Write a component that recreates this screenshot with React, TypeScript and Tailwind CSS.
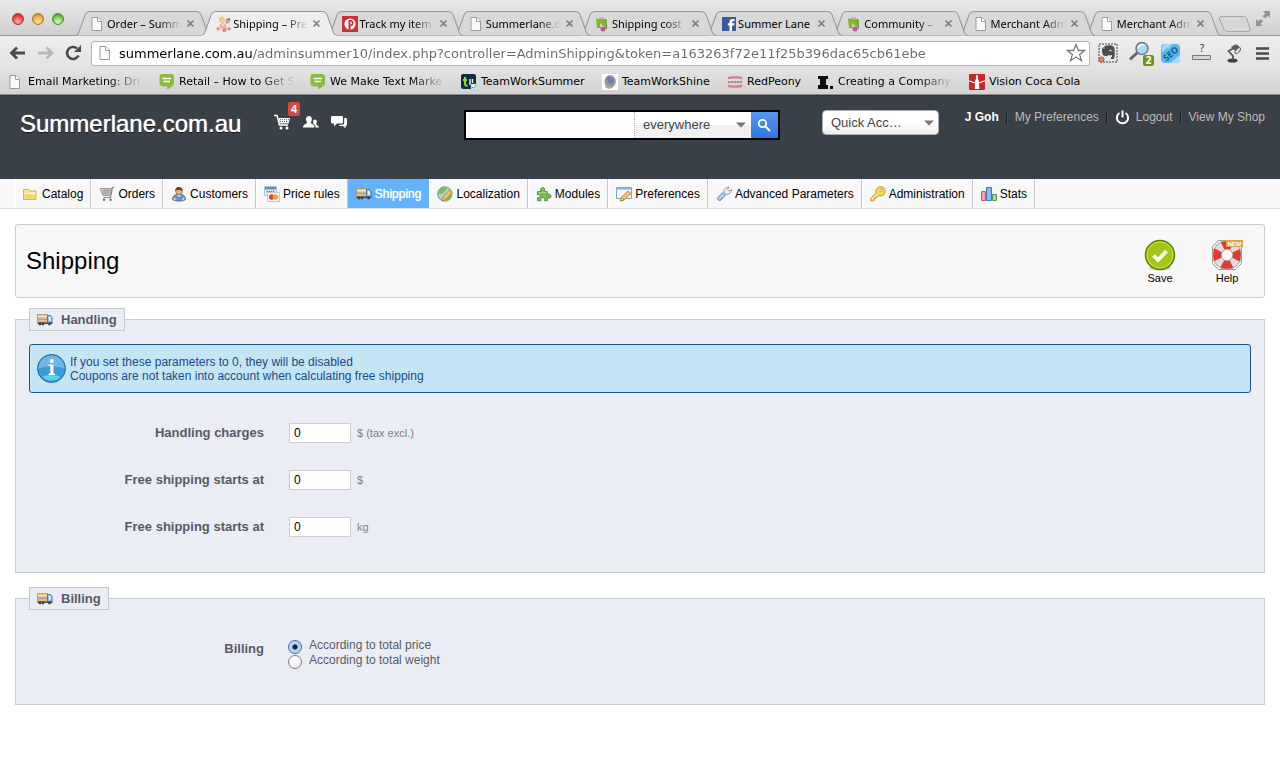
import { useState } from "react";
import type { ReactNode } from "react";

/* ---------- browser icons ---------- */

const PageIcon = () => (
    <svg width="16" height="16" viewBox="0 0 16 16" className="shrink-0">
        <path d="M2 1.500h6l3.500 3.500v9.500H2z" fill="#fafafa" stroke="#9a9a9a" />
        <path d="M7.500 1.500v4h4" fill="#fff" stroke="#9a9a9a" />
    </svg>
);

const CherubIcon = () => (
    <svg width="16" height="16" viewBox="0 0 16 16" className="shrink-0">
        <circle cx="6" cy="4" r="3" fill="#f6c9a0" />
        <path d="M3 4c0-3 3-4 5-3-1 0-3 1-3 3z" fill="#f2c14e" />
        <path d="M9 5c2-2 3 0 6-2-1 3-2 5-5 5z" fill="#d9aa78" />
        <path d="M4 8c2-1 4-1 6 1l.5 2-2 2-4-1-1-2z" fill="#f3a79c" />
        <path d="M0 12l3-1 1 2-2 2zM6 13l4-1 1 2-2 2H7zM11 12l3-1 1 2-2 2z" fill="#e9857c" />
        <circle cx="7" cy="9" r="1.500" fill="#fbd9c4" />
        <path d="M10 3l4-1v1.500l-3 1z" fill="#9b7556" />
    </svg>
);

const PostIcon = () => (
    <svg width="16" height="16" viewBox="0 0 16 16" className="shrink-0">
        <path d="M0 0h16v16H0z" fill="#c8303a" />
        <circle cx="8" cy="8" r="5.600" fill="#fff" />
        <path d="M6.500 4H8.500a3 3 0 0 1 0 6.200v3.500H6.500z" fill="#c8303a" />
        <path d="M8.400 5.500v3a1.500 1.500 0 0 0 0-3z" fill="#fff" />
    </svg>
);

const ShopBagIcon = () => (
    <svg width="16" height="16" viewBox="0 0 16 16" className="shrink-0">
        <path d="M5 3V1.500h3.500V3" fill="none" stroke="#a9c860" />
        <path d="M1 2.500l9 .5 1 9.500L2 12z" fill="#87b52a" />
        <path d="M10 3l1.500.5.5 9-1 .5z" fill="#5f8a1c" />
        <path d="M5 8l1-.5 1 2 2.500 1L9 13H6z" fill="#f3f3f3" stroke="#a9a9a9" strokeWidth=".5" />
        <circle cx="8" cy="13" r="2.500" fill="#c2549b" />
    </svg>
);

const FacebookIcon = () => (
    <svg width="16" height="16" viewBox="0 0 16 16" className="shrink-0">
        <path d="M1 1h14v14H1z" fill="#3b5998" />
        <path d="M8.500 15V9.500H6.800V7.300H8.500V5.800C8.500 4 9.500 3 11.300 3H13.500v2.200h-1.300c-.9 0-1.200.3-1.200 1.100v1H13.500l-.3 2.200H11V15z" fill="#fff" />
    </svg>
);

const ChatIcon = () => (
    <svg width="16" height="16" viewBox="0 0 16 16" className="shrink-0">
        <path d="M3 0h9c2 0 3 1 3 3v6c0 2-1 3-2.500 3.500L8.500 15.500 8 12.500H4C2 12.500.5 11 .5 9V3C.5 1 1.500 0 3 0z" fill="#8cba3f" />
        <path d="M3.500 4.500h8.500M4.500 7.500h6.500" stroke="#fff" strokeWidth="1.500" />
    </svg>
);

const TeamSummerIcon = () => (
    <svg width="16" height="16" viewBox="0 0 16 16" className="shrink-0">
        <rect width="15" height="15" rx="2" fill="#0e2c45" />
        <path d="M4 3v7c0 1 1 2 2.500 1.500M2 6h4" stroke="#9fd22b" strokeWidth="2" fill="none" />
        <path d="M9 5v6M11.500 5v4" stroke="#e9eef2" strokeWidth="1.500" />
        <path d="M10 10h6v6h-6z" fill="#e9f5ea" stroke="#7fae8c" strokeWidth=".6" />
        <path d="M11 13l1.500 1.500L15 11.500" stroke="#319a45" fill="none" />
    </svg>
);

const TeamShineIcon = () => (
    <svg width="16" height="16" viewBox="0 0 16 16" className="shrink-0">
        <path d="M0 0h16v16H0z" fill="#fff" />
        <ellipse cx="8" cy="7.500" rx="5.500" ry="6.500" fill="#8b96b3" />
        <path d="M5 4c2-2 5-1 6 1s0 5-2 5-4-3-4-6z" fill="#6f7ea6" />
        <path d="M3 12c3-1 5 0 8 1l-3 2-4-1z" fill="#b6a88e" />
        <path d="M12 3c2 3 2 6 0 9" stroke="#b9ad98" fill="none" />
    </svg>
);

const RedPeonyIcon = () => (
    <svg width="16" height="16" viewBox="0 0 16 16" className="shrink-0">
        <path d="M1 4.500c3-2 5-1 7-1s4-1 7 1" stroke="#d18083" strokeWidth="2.200" fill="none" />
        <path d="M1 11.500c3 2 5 1 7 1s4 1 7-1" stroke="#d18083" strokeWidth="2.200" fill="none" />
        <path d="M1 8h14" stroke="#bb8587" strokeWidth="2" strokeDasharray="2.500 .5" />
    </svg>
);

const CompanyIcon = () => (
    <svg width="16" height="16" viewBox="0 0 16 16" className="shrink-0">
        <path d="M0 2h10v3H8v6h2v4H0v-4h2V5H0zM12 12h3v3h-3z" fill="#0b0b0b" />
    </svg>
);

const CokeIcon = () => (
    <svg width="16" height="16" viewBox="0 0 16 16" className="shrink-0">
        <rect width="16" height="16" rx="1" fill="#c5292b" />
        <path d="M7.300 1h1.400l.3 4c1 1.500 1.300 3 1 5l.3 5H5.700L6 10c-.3-2 0-3.500 1-5z" fill="#fff" />
        <path d="M0 7c3 0 4 2 6 1.500M10 8.500c2 .5 3-1.500 6-1.500" stroke="#fff" fill="none" strokeWidth="1.200" />
    </svg>
);

/* ---------- menu icons ---------- */

const FolderIcon = () => (
    <svg width="16" height="16" viewBox="0 0 16 16" className="shrink-0">
        <path d="M.5 3.500h5l1 1.500H13v8.500H.500z" fill="#fbe58f" stroke="#dcb04c" />
        <path d="M2 7h3.500l1-1H12V8H2z" fill="#fdf6cf" />
        <path d="M2 8.500h10v4H2z" fill="#f7d566" />
    </svg>
);

const TrolleyIcon = () => (
    <svg width="16" height="16" viewBox="0 0 16 16" className="shrink-0">
        <path d="M1 2.500h11.500L11 9.500H4z" fill="#dcdcdc" stroke="#9a9a9a" />
        <path d="M5 3v6M7 3v6M9 3v6M2 4.800h10M3 7h8.500" stroke="#8a8a8a" strokeWidth=".7" />
        <path d="M15.500 1.500H13.500L11.500 11.500H4.500" fill="none" stroke="#888" strokeWidth="1.200" />
        <circle cx="5" cy="13.800" r="1.300" fill="#777" />
        <circle cx="11.500" cy="13.800" r="1.300" fill="#777" />
    </svg>
);

const UserIcon = () => (
    <svg width="16" height="16" viewBox="0 0 16 16" className="shrink-0">
        <path d="M1.500 13.500c0-3 2-4.500 4-5h5c2 .5 4 2 4 5-2 2-11 2-13 0z" fill="#6793cf" stroke="#4a73b0" />
        <path d="M6.500 9l1.500 2L9.500 9z" fill="#fff" />
        <path d="M2 12l2-.5 1.500 2.500-2 .5zM14 12l-2-.5-1.500 2.500 2 .5z" fill="#f2c095" />
        <circle cx="8" cy="5.500" r="3.300" fill="#e9b07c" stroke="#9b6235" strokeWidth=".6" />
        <path d="M4.300 5.500C3.800 2 6 .8 8.500 1c2.300.2 3.500 2 3.200 4.500C10.500 3.500 7 5 5.500 3.800z" fill="#70431f" />
    </svg>
);

const PriceIcon = () => (
    <svg width="16" height="16" viewBox="0 0 16 16" className="shrink-0">
        <path d="M.5.500h12v9H.500z" fill="#eef4fb" stroke="#a9c1dc" />
        <path d="M1 1h11v2.500H1z" fill="#5b8fd0" />
        <path d="M2.500 5.500h8" stroke="#6b6f95" strokeWidth="1.600" strokeDasharray="1.500 .6" />
        <path d="M3.500 6.500h12v9h-12z" fill="#fbfbfb" stroke="#c6c6c6" />
        <circle cx="7.700" cy="11" r="2.800" fill="#da3c3c" />
        <circle cx="11.500" cy="11" r="2.800" fill="#f0a437" />
    </svg>
);

const TruckIcon = () => (
    <svg width="16" height="16" viewBox="0 0 16 16" className="shrink-0">
        <path d="M.5 2.500h10v8H.500z" fill="#eec48a" stroke="#9b8f80" strokeWidth=".8" />
        <path d="M1 6.500h9v1.500H1z" fill="#9ba4aa" />
        <path d="M1 8.500h9V10H1z" fill="#e3b77b" />
        <path d="M1 4.500h9" stroke="#f8e3bf" />
        <path d="M10.500 3.500h3l1.500 2v5.500h-4.500z" fill="#9dc0ee" stroke="#4d6d9f" strokeWidth=".9" />
        <path d="M12 5h1.300l.7 1.500v2H12z" fill="#eef6ff" />
        <path d="M.5 10.500h15V12H.500z" fill="#56504a" />
        <circle cx="3" cy="12" r="1.400" fill="#463f38" />
        <circle cx="6" cy="12" r="1.400" fill="#463f38" />
        <circle cx="12.500" cy="12" r="1.400" fill="#463f38" />
    </svg>
);

const GlobeIcon = () => (
    <svg width="16" height="16" viewBox="0 0 16 16" className="shrink-0">
        <circle cx="7.800" cy="8" r="7.200" fill="#a9d3d8" stroke="#6f9f5b" />
        <path d="M2 4c2-3 6-3 8-2 0 2-2 2-3 4S3 8 1.500 8C1 6 1.500 5 2 4zM8 8c3-1 5-1 6.500 0 0 3-2 6-6 6.500C8 12 6 10 8 8z" fill="#7fba5b" />
        <path d="M5 14.500l1-3.500 6.500-7 2.500 2.500-6.500 7z" fill="#f5c55a" stroke="#b98433" strokeWidth=".8" />
        <path d="M5 14.500l1-3.300 2.300 2.300z" fill="#fff0d0" stroke="#8d6a32" strokeWidth=".5" />
    </svg>
);

const PuzzleIcon = () => (
    <svg width="16" height="16" viewBox="0 0 16 16" className="shrink-0">
        <path d="M1.500 5.500H5C4 3.500 5 1.500 6.700 1.500S9.300 3.500 8.300 5.500h3v3c2-1 3.700 0 3.700 1.700s-1.700 2.500-3.700 1.500v3H8.300c.8-2-.2-3-1.600-3s-2.500 1-1.700 3H1.500v-3.200c2 .7 2.700-.3 2.700-1.500S3.500 8.300 1.500 9z" fill="#7cba62" stroke="#5b9847" />
        <path d="M2.500 6.500h8" stroke="#a9d694" />
    </svg>
);

const PrefIcon = () => (
    <svg width="16" height="16" viewBox="0 0 16 16" className="shrink-0">
        <path d="M.5 1.500h15v11H.500z" fill="#f6faff" stroke="#7ea4d8" />
        <path d="M1 2h14v1.500H1z" fill="#86b0e8" />
        <path d="M4.500 15l1-4 6.500-6L15 7.500l-7 6.500z" fill="#f7c460" stroke="#b5802f" strokeWidth=".8" />
        <path d="M4.500 15l1-3.500L8 14z" fill="#fff0d0" stroke="#7b5a2b" strokeWidth=".6" />
    </svg>
);

const WrenchIcon = () => (
    <svg width="16" height="16" viewBox="0 0 16 16" className="shrink-0">
        <path d="M8 6.500C7.500 3.500 9.500 1 13 1L11.500 3.500 13 5l2.500-1.500C16 6.500 13 9 10 8.300z" fill="#ececec" stroke="#8b8b8b" strokeWidth=".9" />
        <path d="M7 6.500l2.500 2.500-4.500 5c-2 1.800-4.500-.8-3-2.700z" fill="#a9c2ef" stroke="#6c8cc6" />
        <path d="M7 8.500l-4 4" stroke="#d3e1f9" />
    </svg>
);

const KeyIcon = () => (
    <svg width="16" height="16" viewBox="0 0 16 16" className="shrink-0">
        <path d="M6 7C5 3 8 .5 11 .7s5 3 4 6-4 3.800-6 3L7.500 11H6v1.500H4.500V14L3.500 15H.700v-2.500z" fill="#f8d65a" stroke="#c09430" strokeWidth=".9" />
        <path d="M2 13l5-5" stroke="#fff2b2" />
        <circle cx="11.700" cy="4.300" r="1.300" fill="#fff" stroke="#a87813" strokeWidth=".6" />
    </svg>
);

const StatsIcon = () => (
    <svg width="16" height="16" viewBox="0 0 16 16" className="shrink-0">
        <path d="M.5 5.500h4v9h-4z" fill="#f19a9a" stroke="#cf5b5b" />
        <path d="M5.500 1.500h5v13h-5z" fill="#7fb0f0" stroke="#4478bf" />
        <path d="M11.500 8.500h4v6h-4z" fill="#9cd09b" stroke="#5a9a5a" />
        <path d="M2.500 7v7M8 3v11M13.500 10v4" stroke="#fff" strokeOpacity=".3" />
    </svg>
);

interface BrowserTab {
    title: string;
    icon: ReactNode;
    fade: boolean;
}

const tabs: BrowserTab[] = [
    { title: "Order – Summ", icon: <PageIcon />, fade: true },
    { title: "Shipping – Pre", icon: <CherubIcon />, fade: true },
    { title: "Track my item", icon: <PostIcon />, fade: true },
    { title: "Summerlane.c", icon: <PageIcon />, fade: true },
    { title: "Shipping cost", icon: <ShopBagIcon />, fade: true },
    { title: "Summer Lane", icon: <FacebookIcon />, fade: false },
    { title: "Community –", icon: <ShopBagIcon />, fade: true },
    { title: "Merchant Adm", icon: <PageIcon />, fade: true },
    { title: "Merchant Adm", icon: <PageIcon />, fade: true },
];

const bookmarks = [
    { title: "Email Marketing: Dri", icon: <PageIcon />, width: "w-[151px]", fade: true },
    { title: "Retail – How to Get S", icon: <ChatIcon />, width: "w-[151px]", fade: true },
    { title: "We Make Text Marke", icon: <ChatIcon />, width: "w-[151px]", fade: true },
    { title: "TeamWorkSummer", icon: <TeamSummerIcon />, width: "w-[141px]", fade: false },
    { title: "TeamWorkShine", icon: <TeamShineIcon />, width: "w-[125px]", fade: false },
    { title: "RedPeony", icon: <RedPeonyIcon />, width: "w-[91px]", fade: false },
    { title: "Creating a Company", icon: <CompanyIcon />, width: "w-[151px]", fade: true },
    { title: "Vision Coca Cola", icon: <CokeIcon />, width: "w-[125px]", fade: false },
];

const menu = [
    { title: "Catalog", icon: <FolderIcon /> },
    { title: "Orders", icon: <TrolleyIcon /> },
    { title: "Customers", icon: <UserIcon /> },
    { title: "Price rules", icon: <PriceIcon /> },
    { title: "Shipping", icon: <TruckIcon /> },
    { title: "Localization", icon: <GlobeIcon /> },
    { title: "Modules", icon: <PuzzleIcon /> },
    { title: "Preferences", icon: <PrefIcon /> },
    { title: "Advanced Parameters", icon: <WrenchIcon /> },
    { title: "Administration", icon: <KeyIcon /> },
    { title: "Stats", icon: <StatsIcon /> },
];

const fadeMask = "[mask-image:linear-gradient(to_right,black_70%,transparent)]";

function Tab({ tab, index }: { tab: BrowserTab; index: number }) {
    const active = index === 1;
    return (
        <div className="relative -mr-[10px] h-[25px] min-w-0 flex-1" style={{ zIndex: active ? 20 : 10 - index }}>
            <svg className="absolute inset-0 h-full w-full" viewBox="0 0 136 25" preserveAspectRatio="none">
                <path
                    d="M0 24.500C3 24.500 3 23 4 21L10 4C11 1.500 12 .5 15 .5H121C124 .5 125 1.500 126 4L132 21C133 23 133 24.500 136 24.500"
                    fill={active ? "#eeeeee" : "#d8d8d8"}
                    stroke="#979797"
                />
                {active && <path d="M1 24h134v1H1z" fill="#eeeeee" />}
            </svg>
            <div className="relative flex h-[25px] items-center gap-[1px] pl-[15px] pr-[16px]">
                {tab.icon}
                <span className={`min-w-0 flex-1 whitespace-nowrap text-[11px] leading-4 text-black ${tab.fade ? fadeMask : ""}`}>
                    {tab.title}
                </span>
                <button type="button" aria-label="Close tab" className="ml-[3px] shrink-0">
                    <svg width="9" height="9" viewBox="0 0 9 9">
                        <path d="M1.500 1.500l6 6M7.500 1.500l-6 6" stroke="#777" strokeWidth="1.500" />
                    </svg>
                </button>
            </div>
        </div>
    );
}

function BrowserChrome() {
    return (
        <div className="font-['Noto_Sans','DejaVu_Sans',sans-serif]">
            <div className="flex h-[36px] border-b border-[#979797] bg-linear-to-b from-[#e9e9e9] to-[#cfcfcf] pt-[11px]">
                <div className="flex w-[75px] shrink-0 gap-[8px] pl-[12px] pt-[2px]">
                    <button type="button" aria-label="Close" className="size-[12px] rounded-full border border-[#a33] bg-[radial-gradient(circle_at_50%_75%,#ffb0a8,#e0423e_60%,#b32020)]" />
                    <button type="button" aria-label="Minimize" className="size-[12px] rounded-full border border-[#a8742a] bg-[radial-gradient(circle_at_50%_75%,#ffe9a0,#eca93a_60%,#b9761c)]" />
                    <button type="button" aria-label="Zoom" className="size-[12px] rounded-full border border-[#4e8a3a] bg-[radial-gradient(circle_at_50%_75%,#d8ffb8,#76bd51_60%,#3f8428)]" />
                </div>
                <div className="flex min-w-0 flex-1 pr-[10px]">
                    {tabs.map((t, i) => (
                        <Tab key={i} tab={t} index={i} />
                    ))}
                </div>
                <div className="flex w-[59px] shrink-0 items-start">
                    <button type="button" aria-label="New tab" className="-ml-[3px] mt-[5px]">
                        <svg width="34" height="17" viewBox="0 0 34 17">
                            <path d="M4 .5H25C27 .5 28 1 29 3L32 13C32.500 15 32 15.500 30 15.500H10C8 15.500 7 15 6 13.500L1.500 3C1 1.500 1.500.5 4 .5z" fill="#d6d6d6" stroke="#a5a5a5" />
                        </svg>
                    </button>
                    <svg width="16" height="16" viewBox="0 0 16 16" className="ml-[3px]">
                        <path d="M8 0h7v7l-2.200-2.200L10 7.500 7.700 5.200l2.600-2.800zM1 8l2.200 2.200L5.500 8 8 10.300 5.500 12.700 7.700 15H1z" fill="#959595" />
                    </svg>
                </div>
            </div>

            <div className="flex h-[34px] items-center bg-linear-to-b from-[#eeeeee] to-[#e2e2e2] pl-[9px] pr-[11px]">
                <button type="button" aria-label="Back">
                    <svg width="17" height="14" viewBox="0 0 17 14">
                        <path d="M16 7H3M8 1.500L2.500 7 8 12.500" fill="none" stroke="#4a4a4a" strokeWidth="2.800" />
                    </svg>
                </button>
                <button type="button" aria-label="Forward" className="ml-[12px]">
                    <svg width="17" height="14" viewBox="0 0 17 14">
                        <path d="M0 7h13M8.500 1.500L14 7l-5.500 5.500" fill="none" stroke="#b9b9b9" strokeWidth="2.800" />
                    </svg>
                </button>
                <button type="button" aria-label="Reload" className="ml-[10px]">
                    <svg width="17" height="16" viewBox="0 0 17 16">
                        <path d="M13.500 10.500A6 6 0 1 1 12 3.500" fill="none" stroke="#4a4a4a" strokeWidth="2.600" />
                        <path d="M16 0v7H9z" fill="#4a4a4a" />
                    </svg>
                </button>
                <div className="ml-[9px] flex h-[25px] min-w-0 flex-1 items-center rounded-[3px] border border-[#b5b5b5] bg-white pl-[6px] pr-[3px]">
                    <PageIcon />
                    <input
                        type="text"
                        aria-label="Address"
                        defaultValue="summerlane.com.au/adminsummer10/index.php?controller=AdminShipping&token=a163263f72e11f25b396dac65cb61ebe"
                        className="ml-[5px] h-[21px] min-w-0 flex-1 bg-linear-to-r from-black from-[134px] to-[#6a6a6a] to-[134px] bg-clip-text font-['DejaVu_Sans',sans-serif] text-[13px] text-transparent caret-black outline-none"
                    />
                    <button type="button" aria-label="Bookmark this page">
                        <svg width="20" height="20" viewBox="0 0 20 20">
                            <path d="M10 1.500l2.400 6h6.100l-4.900 3.900 1.900 6.300L10 14l-5.500 3.700 1.900-6.300L1.500 7.500h6.100z" fill="#fff" stroke="#7d7d7d" strokeWidth="1.300" />
                        </svg>
                    </button>
                </div>
                <div className="ml-[8px] flex shrink-0 items-center">
                    <svg width="20" height="20" viewBox="0 0 20 20">
                        <path d="M1 1h18v18H1z" fill="none" stroke="#444" strokeDasharray="2 1" />
                        <path d="M4 6l3-3c3-1 7-1 9 1 1 3 1 9 0 12h-3v-2h1v-2c-2 1-3 0-4 0 0 2-4 1-5 0-1-2-1-4-1-6z" fill="#4c4c4c" />
                        <path d="M4 6h3V3z" fill="#7c7c7c" />
                        <path d="M11 8c1-1 3-1 3 .5" fill="none" stroke="#ddd" />
                        <circle cx="3.500" cy="16.500" r="2.500" fill="#ec8068" stroke="#c25545" />
                    </svg>
                    <svg width="25" height="25" viewBox="0 0 25 25" className="ml-[11px]">
                        <path d="M2 17.500l6-5.500" stroke="#5e666c" strokeWidth="3" strokeLinecap="round" />
                        <circle cx="13" cy="7.500" r="6" fill="#a9daf2" stroke="#6b7780" strokeWidth="1.500" />
                        <path d="M9 7c1-3 4-4 6-3" stroke="#fff" strokeWidth="1.800" fill="none" />
                        <rect x="14" y="14" width="11" height="11" rx="2" fill="#6b9614" />
                        <text x="19.500" y="23" textAnchor="middle" fontSize="10" fontWeight="700" fill="#fff">2</text>
                    </svg>
                    <svg width="19" height="19" viewBox="0 0 19 19" className="ml-[7px] overflow-visible">
                        <rect width="19" height="19" rx="4" fill="#5db9e6" />
                        <path d="M0 4l4-4h5L2 8zM19 11v6l-3 2H9zM5 0h6l-4 5z" fill="#a5dcf5" />
                        <text x="9.500" y="13" textAnchor="middle" fontSize="9" fontWeight="700" fill="#0d5e9c" transform="rotate(-40 9.500 9.500)">SEO</text>
                    </svg>
                    <svg width="20" height="20" viewBox="0 0 20 20" className="ml-[12px] overflow-visible">
                        <text x="10" y="9" textAnchor="middle" fontSize="10" fill="#333">?</text>
                        <path d="M.5 12.500h18v4H.500z" fill="#d6d6d6" stroke="#777" />
                    </svg>
                    <svg width="15" height="19" viewBox="0 0 15 19" className="ml-[14px]">
                        <ellipse cx="6.500" cy="16.500" rx="5" ry="2" fill="#3c3c3c" />
                        <path d="M7 16V12L2.500 7 8 4" fill="none" stroke="#555" strokeWidth="1.800" />
                        <path d="M5 3l4-2.500c3 0 5 2 5 5L11 9z" fill="#5e5e5e" />
                        <ellipse cx="11" cy="7" rx="3.500" ry="1.800" fill="#ddd" stroke="#666" transform="rotate(-50 11 6)" />
                    </svg>
                    <button type="button" aria-label="Menu" className="ml-[15px]">
                        <svg width="13" height="13" viewBox="0 0 13 13">
                            <path d="M0 1.500h13M0 6.500h13M0 11.500h13" stroke="#4a4a4a" strokeWidth="2.600" />
                        </svg>
                    </button>
                </div>
            </div>

            <div className="flex h-[25px] items-center overflow-hidden border-b border-[#8d8d8d] bg-linear-to-b from-[#e2e2e2] to-[#d2d2d2] pl-[8px] font-['DejaVu_Sans',sans-serif]">
                {bookmarks.map((b) => (
                    <a key={b.title} href="#" className={`flex shrink-0 items-center gap-[4px] pr-[15px] text-black ${b.width}`}>
                        {b.icon}
                        <span className={`min-w-0 flex-1 whitespace-nowrap text-[11px] leading-4 ${b.fade ? fadeMask : ""}`}>{b.title}</span>
                    </a>
                ))}
            </div>
        </div>
    );
}

const Arrow = () => (
    <svg width="10" height="6" viewBox="0 0 10 6" className="pointer-events-none absolute right-[5px] top-1/2 -translate-y-1/2">
        <path d="M0 .5h10L5 5.500z" fill="#777" />
    </svg>
);

const Separator = () => <span className="mx-[7px] mt-[2px] h-[12px] w-[2px] border-l border-[#1d2126] bg-[#474f57]" />;

function ShopHeader() {
    return (
        <header className="flex h-[84px] items-start border-t border-[#2f353b] bg-[#3a4047] pl-[20px] pr-[15px] text-[12px]">
            <a href="#" className="w-[254px] shrink-0 pt-[14px] text-[24px] leading-[28px] text-white [text-shadow:0_0_1px_#fff,0_1px_0_#000]">Summerlane.com.au</a>
            <div className="flex w-[190px] shrink-0 gap-[12px] pt-[18px]">
                <a href="#" aria-label="Orders" className="relative">
                    <svg width="17" height="17" viewBox="0 0 17 17">
                        <path d="M0 1.500h3l2.500 9.500H14" fill="none" stroke="#fff" strokeWidth="1.500" />
                        <path d="M4.500 4H16l-1.500 5.500H6z" fill="#fff" />
                        <path d="M6 5.700h9M6 7.700h8" stroke="#3a4047" strokeWidth=".9" strokeDasharray="1 1" />
                        <circle cx="7" cy="14" r="1.500" fill="#fff" />
                        <circle cx="13" cy="14" r="1.500" fill="#fff" />
                    </svg>
                    <span className="absolute -top-[12px] left-[14px] h-[14px] w-[12px] rounded-[2px] bg-[#d5493f] text-center text-[11px] font-bold leading-[14px] text-white">4</span>
                </a>
                <a href="#" aria-label="Customers">
                    <svg width="16" height="17" viewBox="0 0 16 17">
                        <path d="M6 2c2 0 3 1.500 2.800 3.500S8 8 7.800 8.500c0 1.500 3.700 1.500 3.700 5H0c0-3.500 4-3.500 4-5C4 8 3.200 7.500 3 5.500S4 2 6 2z" fill="#fff" />
                        <path d="M11.800 5.500c1.600 0 2.200 1.200 2 2.700s-.6 1.600-.6 2c0 1 2.800 1 2.800 3.300h-3.500c0-2.500-1.500-3.300-2.500-3.800.3-.5.300-.6.200-1.500-.2-1.500.3-2.700 1.600-2.700z" fill="#fff" />
                    </svg>
                </a>
                <a href="#" aria-label="Messages">
                    <svg width="17" height="17" viewBox="0 0 17 17">
                        <path d="M1.500 2h9c1 0 1.500.5 1.500 1.500V8c0 1-.5 1.500-1.500 1.500H6L3 12.500V9.500H1.500C.5 9.500 0 9 0 8V3.500C0 2.500.5 2 1.500 2z" fill="#fff" />
                        <path d="M13.200 4h1.300c1 0 1.500.5 1.500 1.500v5c0 .8-.5 1.500-1.500 1.500v2.500L12 12H7.500L9 10.700h2.200c1.300 0 2-.7 2-2z" fill="#fff" />
                    </svg>
                </a>
            </div>
            <form className="mt-[14px] flex h-[30px] w-[316px] shrink-0 border-2 border-black bg-white" onSubmit={(e) => e.preventDefault()}>
                <input type="text" aria-label="Search" className="w-[168px] bg-white px-[6px] text-[13px] text-black outline-none" />
                <div className="relative flex-1 border-l border-dotted border-[#aaa]">
                    <select aria-label="Search in" className="h-full w-full appearance-none bg-linear-to-b from-white from-50% to-[#f0f0f0] to-50% pl-[8px] text-[13px] text-[#444] outline-none">
                        <option>everywhere</option>
                    </select>
                    <Arrow />
                </div>
                <button type="submit" aria-label="Search" className="flex w-[27px] items-center justify-center bg-linear-to-b from-[#5596ee] to-[#2d78e4]">
                    <svg width="15" height="15" viewBox="0 0 15 15">
                        <circle cx="5.500" cy="5.500" r="3.700" fill="none" stroke="#fff" strokeWidth="1.800" />
                        <path d="M8.500 8.500l4.500 4.500" stroke="#fff" strokeWidth="2.200" />
                    </svg>
                </button>
            </form>
            <div className="relative ml-[42px] mt-[14px] h-[25px] w-[117px] shrink-0">
                <select aria-label="Quick Access" className="h-full w-full appearance-none rounded-[4px] border border-[#aaa] bg-linear-to-b from-white from-50% to-[#ededed] pl-[8px] text-[13px] text-[#444] outline-none">
                    <option>Quick Acc…</option>
                </select>
                <Arrow />
            </div>
            <div className="ml-auto flex items-center pt-[12px] leading-[18px] text-[#bbbbbb]">
                <span className="font-bold text-white">J Goh</span>
                <Separator />
                <a href="#">My Preferences</a>
                <Separator />
                <a href="#" className="flex items-center gap-[6px]">
                    <svg width="15" height="15" viewBox="0 0 15 15">
                        <path d="M4.500 3A5.600 5.600 0 1 0 10.500 3M7.500 .5v7" fill="none" stroke="#fff" strokeWidth="2" />
                    </svg>
                    Logout
                </a>
                <Separator />
                <a href="#">View My Shop</a>
            </div>
        </header>
    );
}

function Nav() {
    return (
        <nav className="flex h-[30px] border-b border-[#dedede] bg-[#f8f8f8] pl-[15px] text-[12px]">
            {menu.map((m) => (
                <a
                    key={m.title}
                    href="#"
                    className={
                        m.title === "Shipping"
                            ? "flex items-center gap-[3px] bg-[#64b2fd] px-[8px] text-white [text-shadow:0_0_1px_#fff]"
                            : "flex items-center gap-[3px] border-l border-r border-l-white border-r-[#c8c8c8] px-[7px] text-black"
                    }
                >
                    {m.icon}
                    {m.title}
                </a>
            ))}
        </nav>
    );
}

function Legend({ children }: { children: ReactNode }) {
    return (
        <legend className="flex h-[23px] items-center gap-[8px] border border-[#c5c8cf] bg-[#ebedf4] px-[7px] text-[13px] font-bold text-[#585a69]">
            <TruckIcon />
            {children}
        </legend>
    );
}

const fields = [
    { id: "handling", label: "Handling charges", unit: "$ (tax excl.)" },
    { id: "free-price", label: "Free shipping starts at", unit: "$" },
    { id: "free-weight", label: "Free shipping starts at", unit: "kg" },
];

const billingOptions = [
    { id: "price", label: "According to total price" },
    { id: "weight", label: "According to total weight" },
];

export default function App() {
    const [values, setValues] = useState<Record<string, string>>({ handling: "0", "free-price": "0", "free-weight": "0" });
    const [billing, setBilling] = useState("price");

    return (
        <div className="min-h-screen bg-white font-['Liberation_Sans',Arial,sans-serif]">
            <BrowserChrome />
            <ShopHeader />
            <Nav />

            <main className="px-[15px] pt-[15px]">
                <div className="flex h-[74px] items-center justify-between rounded-[3px] border border-[#cccccc] bg-[#f8f8f8] pl-[10px] pr-[17px]">
                    <h1 className="text-[24px] leading-[30px] text-black">Shipping</h1>
                    <div className="flex gap-[27px] text-[11px] leading-[14px] text-black">
                        <button type="button" className="flex w-[40px] flex-col items-center pt-[1px]">
                            <svg width="32" height="32" viewBox="0 0 32 32">
                                <ellipse cx="16" cy="29" rx="11" ry="2.500" fill="#ccc" />
                                <circle cx="16" cy="16" r="14.500" fill="#a3c614" stroke="#5b8408" strokeWidth="1.500" />
                                <circle cx="16" cy="16" r="13" fill="none" stroke="#c9e24b" />
                                <path d="M9.500 16.500l4.500 4.500 8.500-9" fill="none" stroke="#fff" strokeWidth="3.800" />
                            </svg>
                            Save
                        </button>
                        <button type="button" className="flex w-[40px] flex-col items-center pt-[1px]">
                            <svg width="32" height="32" viewBox="0 0 32 32">
                                <path d="M1.500 7.500l6-6h17l6 6v17l-6 6h-17l-6-6z" fill="#f4f4f4" stroke="#9a9a9a" />
                                <circle cx="16" cy="16" r="10" fill="none" stroke="#dedede" strokeWidth="8.500" />
                                <circle cx="16" cy="16" r="10" fill="none" stroke="#df3b33" strokeWidth="8.500" strokeDasharray="9.500 6.208" strokeDashoffset="4.750" />
                                <circle cx="16" cy="16" r="14.400" fill="none" stroke="#a7a7a7" />
                                <circle cx="16" cy="16" r="5.700" fill="#f8f8f8" stroke="#a7a7a7" />
                                <rect x="15" y="1" width="17" height="7" fill="#e5a04e" />
                                <text x="23.500" y="7" textAnchor="middle" fontSize="6" fontWeight="700" fill="#fff">NEW</text>
                            </svg>
                            Help
                        </button>
                    </div>
                </div>

                <fieldset className="mt-[10px] border border-[#c9ccd3] bg-[#ebedf4] px-[13px] pb-[35px]">
                    <Legend>Handling</Legend>
                    <div className="mt-[13px] flex h-[49px] items-center gap-[3px] rounded-[3px] border border-[#1d5590] bg-[#c5e5f7] pl-[7px] text-[12px] leading-[14px] text-[#1b4a87]">
                        <svg width="30" height="30" viewBox="0 0 30 30" className="shrink-0">
                            <circle cx="14.500" cy="14.500" r="14" fill="#3c9bd9" stroke="#2c5f85" strokeWidth=".9" />
                            <path d="M1.500 14.500a13 13 0 0 1 26 0c-8-3-18-3-26 0z" fill="#6cb8e8" />
                            <path d="M5.500 23a13 13 0 0 0 18 0c-5-3-13-3-18 0z" fill="#55d3f3" />
                            <circle cx="14.800" cy="7" r="2" fill="#fff" />
                            <path d="M11.500 10.500h5v9H18V21h-6.500v-1.500h1.800v-7.500h-1.800z" fill="#fff" />
                        </svg>
                        <p>
                            If you set these parameters to 0, they will be disabled
                            <br />
                            Coupons are not taken into account when calculating free shipping
                        </p>
                    </div>
                    <div className="mt-[30px] flex flex-col gap-[27px]">
                        {fields.map((f) => (
                            <div key={f.id} className="flex h-[20px] items-center">
                                <label htmlFor={f.id} className="w-[235px] text-right text-[13px] font-bold text-[#585a69]">{f.label}</label>
                                <input
                                    id={f.id}
                                    type="text"
                                    value={values[f.id]}
                                    onChange={(e) => setValues({ ...values, [f.id]: e.target.value })}
                                    className="ml-[25px] h-[20px] w-[62px] border border-[#cccccc] bg-white px-[4px] text-[12px] text-black outline-none"
                                />
                                <span className="ml-[6px] text-[11px] text-[#7f7f7f]">{f.unit}</span>
                            </div>
                        ))}
                    </div>
                </fieldset>

                <fieldset className="mt-[14px] border border-[#c9ccd3] bg-[#ebedf4] px-[13px] pb-[36px]">
                    <Legend>Billing</Legend>
                    <div className="mt-[28px] flex items-start" role="radiogroup" aria-labelledby="billing-label">
                        <span id="billing-label" className="w-[235px] text-right text-[13px] font-bold leading-[22px] text-[#585a69]">Billing</span>
                        <div className="ml-[24px] text-[12px] leading-[15px] text-[#585a69]">
                            {billingOptions.map((o) => (
                                <div key={o.id} className="flex h-[15px] items-start gap-[7px]">
                                    <input
                                        id={o.id}
                                        type="radio"
                                        name="billing"
                                        checked={billing === o.id}
                                        onChange={() => setBilling(o.id)}
                                        className="mt-[2px] size-[14px] appearance-none rounded-full border border-[#7d7d7d] bg-linear-to-b from-white to-[#ededed] checked:border-[#4b6299] checked:bg-[radial-gradient(circle,#0b1f47_2px,#a9cdf3_3px,#cfe8fd)]"
                                    />
                                    <label htmlFor={o.id}>{o.label}</label>
                                </div>
                            ))}
                        </div>
                    </div>
                </fieldset>
            </main>
        </div>
    );
}
